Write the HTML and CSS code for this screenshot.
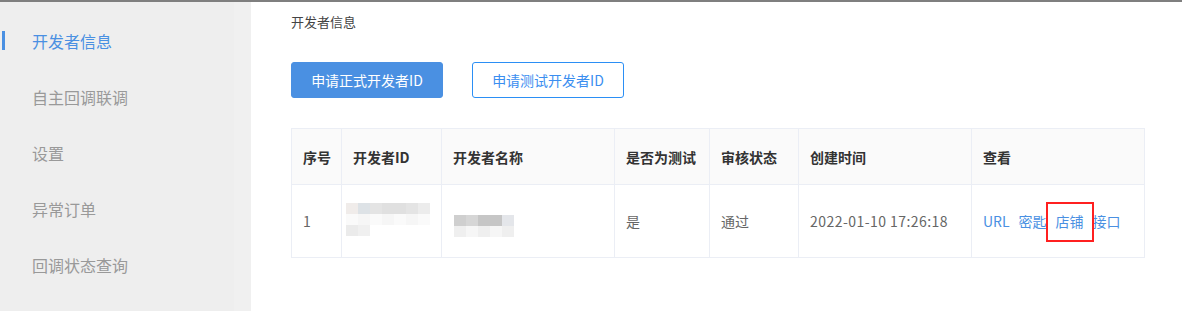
FILE: index.html
```html
<!DOCTYPE html>
<html lang="zh">
<head>
<meta charset="utf-8">
<title>开发者信息</title>
<link rel="stylesheet" href="styles.css">
</head>
<body>
<div class="top-bar"></div>
<div class="layout">
  <aside class="sidebar">
    <ul class="menu">
      <li class="menu-item active">开发者信息</li>
      <li class="menu-item">自主回调联调</li>
      <li class="menu-item">设置</li>
      <li class="menu-item">异常订单</li>
      <li class="menu-item">回调状态查询</li>
    </ul>
  </aside>
  <main class="main">
    <div class="page-title">开发者信息</div>
    <div class="actions">
      <button class="btn btn-primary">申请正式开发者ID</button>
      <button class="btn btn-outline">申请测试开发者ID</button>
    </div>
    <table class="table">
      <colgroup>
        <col class="c1"><col class="c2"><col class="c3"><col class="c4"><col class="c5"><col class="c6"><col class="c7">
      </colgroup>
      <thead>
        <tr>
          <th>序号</th>
          <th>开发者ID</th>
          <th>开发者名称</th>
          <th>是否为测试</th>
          <th>审核状态</th>
          <th>创建时间</th>
          <th>查看</th>
        </tr>
      </thead>
      <tbody>
        <tr>
          <td>1</td>
          <td>
            <div class="mosaic mosaic-id">
              <div class="m-row">
                <span class="t t-a"></span><span class="t t-b"></span><span class="t t-c"></span><span class="t t-d"></span><span class="t t-d"></span><span class="t t-c"></span><span class="t t-e"></span>
              </div>
              <div class="m-row">
                <span class="t t-f"></span><span class="t t-g"></span><span class="t t-f"></span><span class="t t-g"></span><span class="t t-f"></span><span class="t t-g"></span><span class="t t-f"></span>
              </div>
              <div class="m-row">
                <span class="t t-h"></span><span class="t t-i"></span>
              </div>
            </div>
          </td>
          <td>
            <div class="mosaic mosaic-name">
              <div class="m-row">
                <span class="t t-j"></span><span class="t t-k"></span><span class="t t-l"></span><span class="t t-l"></span><span class="t t-m"></span>
              </div>
              <div class="m-row">
                <span class="t t-n"></span><span class="t t-o"></span><span class="t t-n"></span><span class="t t-o"></span><span class="t t-n"></span>
              </div>
            </div>
          </td>
          <td>是</td>
          <td>通过</td>
          <td class="date">2022-01-10 17:26:18</td>
          <td class="links-cell">
            <a class="link">URL</a><a class="link">密匙</a><a class="link">店铺</a><a class="link">接口</a>
            <span class="highlight"></span>
          </td>
        </tr>
      </tbody>
    </table>
  </main>
</div>
</body>
</html>
```

FILE: styles.css
```css
* { box-sizing: border-box; }
html, body { margin: 0; padding: 0; background: #fff; }
body {
  font-family: "Noto Sans CJK SC", "Microsoft YaHei", sans-serif;
  color: #333;
  width: 1182px;
  height: 311px;
  overflow: hidden;
}
.top-bar { height: 2px; background: #7f7f7f; }
.layout { display: flex; height: 309px; }
.sidebar {
  width: 251px;
  flex: none;
  background: #eeeeee;
  border-right: 17px solid #f0f0f0;
  padding-top: 11px;
}
.menu { list-style: none; margin: 0; padding: 0; }
.menu-item {
  position: relative;
  height: 56px;
  line-height: 56px;
  padding-left: 32px;
  font-size: 16px;
  color: #999;
}
.menu-item.active { color: #4a90e2; }
.menu-item.active::before {
  content: "";
  position: absolute;
  left: 2px;
  top: 18px;
  width: 3px;
  height: 19px;
  background: #4a90e2;
}
.main { flex: 1; padding-left: 40px; }
.page-title {
  font-size: 13px;
  line-height: 20px;
  margin-top: 10px;
  color: #444;
}
.actions { display: flex; gap: 29px; margin-top: 30px; }
.btn {
  width: 152px;
  height: 36px;
  border-radius: 3px;
  font-family: inherit;
  font-size: 14px;
  padding: 0;
  cursor: pointer;
}
.btn-primary { background: #4a90e2; border: 1px solid #4a90e2; color: #fff; }
.btn-outline { background: #fff; border: 1px solid #2b8ff5; color: #3a8ef0; }
.table {
  margin-top: 30px;
  border-collapse: collapse;
  width: 853px;
  table-layout: fixed;
  font-size: 14px;
}
.c1 { width: 50px; } .c2 { width: 100px; } .c3 { width: 173px; } .c4 { width: 95px; }
.c5 { width: 89px; } .c6 { width: 173px; } .c7 { width: 173px; }
.table th, .table td {
  border: 1px solid #ebeef5;
  text-align: left;
  padding: 0 0 0 11px;
}
.table th {
  height: 56px;
  background: #fafafa;
  font-weight: bold;
  color: #333;
}
.table td { height: 73px; color: #666; padding-top: 0; }
.date { letter-spacing: 0.45px; }
.mosaic { display: flex; flex-direction: column; height: 34px; filter: blur(0.6px); }
.mosaic-id { margin-left: -7px; margin-top: -2px; }
.mosaic-name { margin-left: 1px; margin-top: 10px; height: 22px; }
.m-row { display: flex; height: 11px; }
.t { display: block; width: 12px; height: 11px; }
.t-a { background: #f0ecea; }
.t-b { background: #dde2e6; }
.t-c { background: #e4e4e4; }
.t-d { background: #e0e0e0; }
.t-e { background: #ececec; }
.t-f { background: #fafafa; }
.t-g { background: #f6f6f6; }
.t-h { background: #ebebeb; }
.t-i { background: #f0f0f0; }
.t-j { background: #cfcfcf; }
.t-k { background: #d6d6d6; }
.t-l { background: #c6c6c6; }
.t-m { background: #e4e6ea; }
.t-n { background: #efefef; }
.t-o { background: #f6f6f6; }
.links-cell { position: relative; }
.link { color: #4a90e2; margin-right: 9px; }
.highlight {
  position: absolute;
  left: 74px;
  top: 17px;
  width: 48px;
  height: 40px;
  border: 2px solid #ff2020;
}
```
